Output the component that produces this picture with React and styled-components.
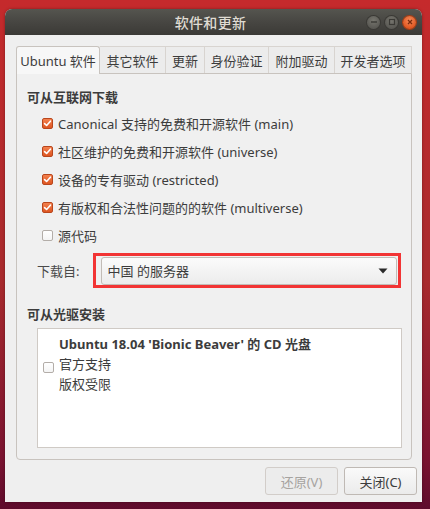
import React from "react";
import styled, { createGlobalStyle } from "styled-components";

const Global = createGlobalStyle`
  html, body { margin: 0; padding: 0; }
  body {
    font-family: "Noto Sans", "Noto Sans CJK SC", sans-serif;
    font-size: 13px;
    color: #3c3c3c;
  }
`;

const Desktop = styled.div`
  width: 430px;
  height: 509px;
  box-sizing: border-box;
  padding: 9px 8px 7px 5px;
  background:
    linear-gradient(180deg, #c52a2c 0%, #a82a2d 55%, #7a1330 90%, #5e0b2c 100%);
  overflow: hidden;
`;

const Window = styled.div`
  width: 417px;
  height: 493px;
  display: flex;
  flex-direction: column;
  background: #efefef;
  border-radius: 7px 7px 0 0;
  overflow: hidden;
  box-shadow: 0 0 3px rgba(0, 0, 0, 0.35);
`;

const TitleBar = styled.div`
  height: 26px;
  flex: none;
  display: grid;
  grid-template-columns: 1fr auto 1fr;
  align-items: center;
  padding-right: 6px;
  background: linear-gradient(180deg, #55554f 0%, #474642 50%, #3b3a36 100%);
`;

const Title = styled.div`
  grid-column: 2;
  color: #dfdbd2;
  font-size: 14px;
  font-weight: 500;
  letter-spacing: 0.3px;
`;

const Controls = styled.div`
  grid-column: 3;
  justify-self: end;
  display: flex;
  gap: 5px;
  align-items: center;
`;

const CtrlBtn = styled.div`
  width: 13px;
  height: 13px;
  border-radius: 50%;
  display: flex;
  align-items: center;
  justify-content: center;
  background: ${(p) =>
    p.close
      ? "radial-gradient(circle at 50% 35%, #f58a5a, #e1561f 70%)"
      : "radial-gradient(circle at 50% 35%, #77766f, #5a5954 70%)"};
  box-shadow: 0 0 0 1px ${(p) => (p.close ? "#a63d14" : "#3a3935")};
`;

const Body = styled.div`
  flex: 1;
  display: flex;
  flex-direction: column;
  padding: 11px 10px 7px 11px;
`;

const Tabs = styled.div`
  display: flex;
  height: 27px;
  align-items: flex-end;
`;

const Tab = styled.div`
  box-sizing: border-box;
  width: ${(p) => p.w}px;
  height: ${(p) => (p.active ? 28 : 27)}px;
  display: flex;
  align-items: center;
  justify-content: center;
  font-size: 13px;
  color: #3c3c3c;
  background: ${(p) => (p.active ? "#f7f7f7" : "#ececec")};
  border: 1px solid ${(p) => (p.active ? "#c8c3be" : "#d8d4d0")};
  border-bottom: none;
  border-left-width: ${(p) => (p.first ? 1 : 0)}px;
  border-radius: ${(p) => (p.active ? "3px 3px 0 0" : "0")};
  margin-bottom: ${(p) => (p.active ? -1 : 0)}px;
  position: relative;
  z-index: ${(p) => (p.active ? 2 : 1)};
`;

const Panel = styled.div`
  box-sizing: border-box;
  height: 387px;
  border: 1px solid #c8c3be;
  border-radius: 0 0 4px 4px;
  background: #f0f0f0;
  display: flex;
  flex-direction: column;
  padding: 13px 10px 0 10px;
`;

const Heading = styled.div`
  font-weight: 700;
  font-size: 13px;
  height: 20px;
  line-height: 20px;
  color: #3c3c3c;
`;

const CheckList = styled.div`
  display: flex;
  flex-direction: column;
  margin-top: 2px;
  padding-left: 15px;
`;

const CheckRow = styled.label`
  height: 28px;
  display: flex;
  align-items: center;
  gap: 5px;
  font-size: 13px;
  color: #3c3c3c;
`;

const Box = styled.span`
  box-sizing: border-box;
  width: 11px;
  height: 11px;
  flex: none;
  border-radius: 2px;
  display: flex;
  align-items: center;
  justify-content: center;
  border: 1px solid ${(p) => (p.checked ? "#b9461c" : "#b3ada8")};
  background: ${(p) =>
    p.checked
      ? "linear-gradient(180deg, #f3814e, #dd5521)"
      : "linear-gradient(180deg, #ffffff, #f4f4f4)"};
`;

const Check = ({ checked }) => (
  <Box checked={checked}>
    {checked && (
      <svg width="9" height="9" viewBox="0 0 9 9">
        <path d="M1.6 4.6 L3.6 6.5 L7.4 2.2" fill="none" stroke="#fff" strokeWidth="1.6" strokeLinecap="round" strokeLinejoin="round" />
      </svg>
    )}
  </Box>
);

const SourceRow = styled.div`
  display: flex;
  align-items: center;
  margin-top: 3px;
  padding-left: 10px;
  height: 36px;
`;

const SourceLabel = styled.div`
  width: 56px;
  color: #4a4a4a;
  font-size: 13px;
`;

const Highlight = styled.div`
  box-sizing: border-box;
  width: 311px;
  height: 35px;
  border: 3px solid #f23434;
  padding: 1px 1px 0 5px;
  display: flex;
`;

const Combo = styled.div`
  box-sizing: border-box;
  flex: 1;
  height: 28px;
  border: 1px solid #c2bcb7;
  border-radius: 3px;
  background: linear-gradient(180deg, #fbfbfb, #ececec);
  display: flex;
  align-items: center;
  justify-content: space-between;
  padding: 0 8px 0 6px;
  font-size: 13px;
  color: #3c3c3c;
`;

const Heading2 = styled(Heading)`
  margin-top: 16px;
`;

const ListBox = styled.div`
  box-sizing: border-box;
  margin: 4px 0 0 10px;
  width: 365px;
  height: 120px;
  background: #ffffff;
  border: 1px solid #cfcac5;
  display: flex;
  padding: 5px 0 0 5px;
  gap: 5px;
`;

const ListCheckCol = styled.div`
  padding-top: 28px;
`;

const ListText = styled.div`
  display: flex;
  flex-direction: column;
  line-height: 20px;
  font-size: 13px;
  color: #3c3c3c;
`;

const Bold = styled.div`
  font-weight: 700;
`;

const Buttons = styled.div`
  display: flex;
  justify-content: flex-end;
  gap: 6px;
  margin: 7px -5px 0 0;
`;

const Button = styled.div`
  box-sizing: border-box;
  width: 73px;
  height: 28px;
  border: 1px solid ${(p) => (p.disabled ? "#d2cdc9" : "#bfb9b4")};
  border-radius: 3px;
  background: ${(p) =>
    p.disabled ? "#ececec" : "linear-gradient(180deg, #fafafa, #ebebeb)"};
  color: ${(p) => (p.disabled ? "#a6a3a0" : "#3c3c3c")};
  display: flex;
  align-items: center;
  justify-content: center;
  font-size: 13px;
`;

const tabs = [
  ["Ubuntu 软件", 84],
  ["其它软件", 66],
  ["更新", 39],
  ["身份验证", 64],
  ["附加驱动", 66],
  ["开发者选项", 77],
];

const sources = [
  ["Canonical 支持的免费和开源软件 (main)", true],
  ["社区维护的免费和开源软件 (universe)", true],
  ["设备的专有驱动 (restricted)", true],
  ["有版权和合法性问题的的软件 (multiverse)", true],
  ["源代码", false],
];

export default function App() {
  return (
    <>
      <Global />
      <Desktop>
        <Window>
          <TitleBar>
            <Title>软件和更新</Title>
            <Controls>
              <CtrlBtn>
                <svg width="8" height="8" viewBox="0 0 8 8">
                  <rect x="1" y="3.3" width="6" height="1.4" fill="#3a3935" />
                </svg>
              </CtrlBtn>
              <CtrlBtn>
                <svg width="8" height="8" viewBox="0 0 8 8">
                  <rect x="1.5" y="1.5" width="5" height="5" fill="none" stroke="#3a3935" strokeWidth="1.2" />
                </svg>
              </CtrlBtn>
              <CtrlBtn close>
                <svg width="8" height="8" viewBox="0 0 8 8">
                  <path d="M2 2 L6 6 M6 2 L2 6" stroke="#7a2a0c" strokeWidth="1.3" />
                </svg>
              </CtrlBtn>
            </Controls>
          </TitleBar>
          <Body>
            <Tabs>
              {tabs.map(([t, w], i) => (
                <Tab key={t} w={w} active={i === 0} first={i === 0}>
                  {t}
                </Tab>
              ))}
            </Tabs>
            <Panel>
              <Heading>可从互联网下载</Heading>
              <CheckList>
                {sources.map(([t, c]) => (
                  <CheckRow key={t}>
                    <Check checked={c} />
                    {t}
                  </CheckRow>
                ))}
              </CheckList>
              <SourceRow>
                <SourceLabel>下载自:</SourceLabel>
                <Highlight>
                  <Combo>
                    <span>中国 的服务器</span>
                    <svg width="10" height="6" viewBox="0 0 10 6">
                      <path d="M0.5 0.5 L9.5 0.5 L5 5.5 Z" fill="#2a2a2a" />
                    </svg>
                  </Combo>
                </Highlight>
              </SourceRow>
              <Heading2>可从光驱安装</Heading2>
              <ListBox>
                <ListCheckCol>
                  <Check checked={false} />
                </ListCheckCol>
                <ListText>
                  <Bold>Ubuntu 18.04 'Bionic Beaver' 的 CD 光盘</Bold>
                  <span>官方支持</span>
                  <span>版权受限</span>
                </ListText>
              </ListBox>
            </Panel>
            <Buttons>
              <Button disabled>还原(V)</Button>
              <Button>关闭(C)</Button>
            </Buttons>
          </Body>
        </Window>
      </Desktop>
    </>
  );
}
